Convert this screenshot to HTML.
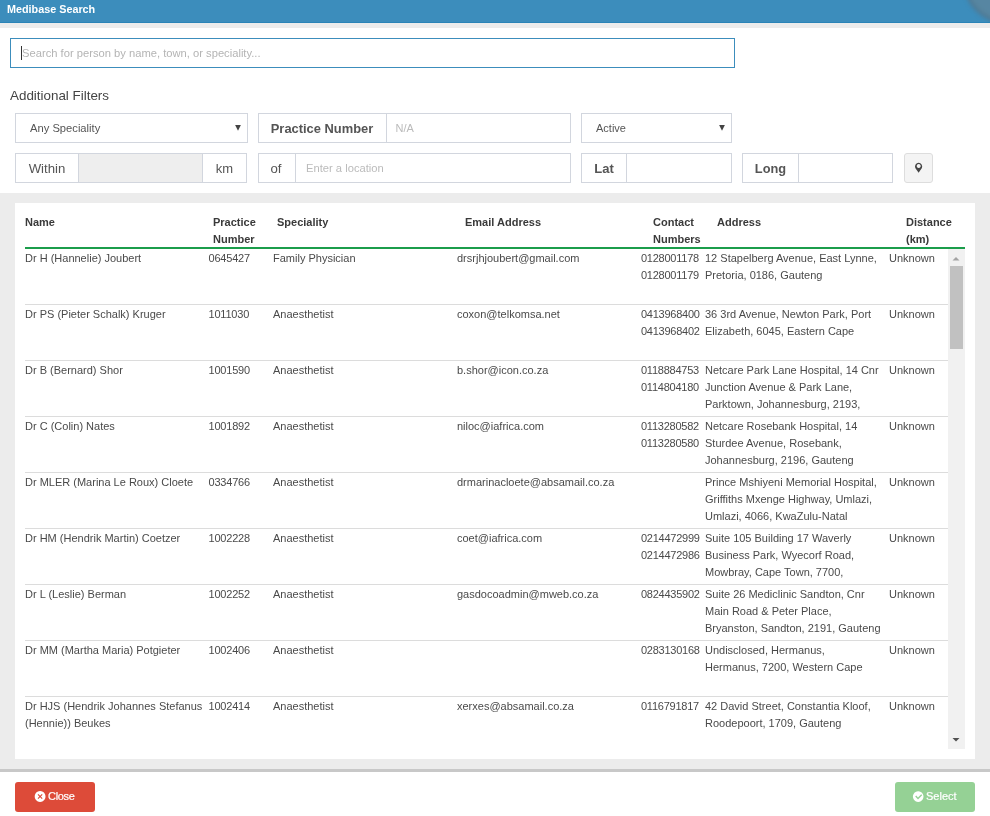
<!DOCTYPE html>
<html><head><meta charset="utf-8">
<style>
*{box-sizing:border-box;margin:0;padding:0}
body{will-change:transform}
html,body{width:990px;height:816px;overflow:hidden;background:#fff;font-family:"Liberation Sans",sans-serif;color:#444}
.a{position:absolute}
#hdr{left:0;top:0;width:990px;height:23px;background:#3c8dbc;border-bottom:1px solid #2b84b7}
#hdr .t{left:7px;top:1px;font-size:10.8px;font-weight:bold;color:#fff;line-height:16px}
#blob{left:964px;top:-59px;width:82px;height:82px;border-radius:50%;background:rgba(110,130,140,0.55);border:3px solid rgba(70,90,110,0.35);filter:blur(2px)}
#strip{left:0;top:23px;width:990px;height:5px;background:#ececec}
#search{left:10px;top:38px;width:725px;height:30px;border:1px solid #3c8dbc}
#search .ph{left:11px;top:7px;font-size:11.2px;line-height:14px;color:#b4b4b4}
#search .cur{left:10px;top:7px;width:1px;height:14px;background:#333}
#af{left:10px;top:88px;font-size:13.4px;line-height:16px;color:#444}
.box{border:1px solid #d2d6de;background:#fff}
.lbl{font-size:12.5px;color:#555;line-height:28px;text-align:center}
.sel{font-size:11px;color:#555;line-height:28px}
.arr{font-size:10px;color:#444;line-height:28px}
#gray{left:0;top:193px;width:990px;height:576px;background:#ececec}
#gline{left:0;top:769px;width:990px;height:3px;background:#c8c8c8}
#panel{left:15px;top:203px;width:960px;height:556px;background:#fff}
.th{font-size:11px;font-weight:bold;color:#3a3a3a;line-height:17px}
#green{left:25px;top:247px;width:940px;height:2px;background:#1b9d4b}
.row{left:25px;width:923px;height:56px;border-bottom:1px solid #dcdcdc}
.td{font-size:11px;line-height:17px;color:#4a4a4a;white-space:nowrap}
#track{left:948px;top:249px;width:17px;height:500px;background:#f1f1f1}
#thumb{left:950px;top:266px;width:13px;height:83px;background:#c1c1c1}
.btn{border-radius:3px}
.btxt{color:#fff;font-size:11px;line-height:29px;letter-spacing:-0.3px;-webkit-text-stroke:0.2px #fff}
</style></head><body>
<div id="hdr" class="a" style="overflow:hidden"><div class="t a">Medibase Search</div><div id="blob" class="a"></div></div>
<div id="strip" class="a"></div>

<div id="search" class="a"><div class="cur a"></div><div class="ph a">Search for person by name, town, or speciality...</div></div>
<div id="af" class="a">Additional Filters</div>

<!-- row 1 -->
<div class="a box" style="left:15px;top:113px;width:233px;height:30px"></div>
<div class="a sel" style="left:30px;top:114px;font-size:11.2px">Any Speciality</div>
<svg class="a" style="left:233px;top:122px" width="10" height="12"><path fill="#444" d="M2.1 3.1h5.8l-2.9 5.6z"/></svg>

<div class="a box" style="left:258px;top:113px;width:313px;height:30px"></div>
<div class="a" style="left:386px;top:114px;width:1px;height:28px;background:#d2d6de"></div>
<div class="a lbl" style="left:259px;top:115px;width:127px;font-weight:bold;font-size:12.9px;padding-right:1px">Practice Number</div>
<div class="a sel" style="left:395.5px;top:114px;color:#bbb">N/A</div>

<div class="a box" style="left:581px;top:113px;width:151px;height:30px"></div>
<div class="a sel" style="left:596px;top:114px">Active</div>
<svg class="a" style="left:717px;top:122px" width="10" height="12"><path fill="#444" d="M2.1 3.1h5.8l-2.9 5.6z"/></svg>

<!-- row 2 -->
<div class="a box" style="left:15px;top:153px;width:232px;height:30px"></div>
<div class="a" style="left:78px;top:154px;width:125px;height:28px;background:#eee;border-left:1px solid #d2d6de;border-right:1px solid #d2d6de"></div>
<div class="a lbl" style="left:16px;top:155px;width:62px;font-size:13.2px">Within</div>
<div class="a lbl" style="left:203px;top:155px;width:43px;font-size:13px">km</div>

<div class="a box" style="left:258px;top:153px;width:313px;height:30px"></div>
<div class="a" style="left:295px;top:154px;width:1px;height:28px;background:#d2d6de"></div>
<div class="a lbl" style="left:258px;top:155px;width:36px;font-size:13.2px">of</div>
<div class="a sel" style="left:306px;top:154px;color:#bbb;font-size:11.2px">Enter a location</div>

<div class="a box" style="left:581px;top:153px;width:151px;height:30px"></div>
<div class="a" style="left:626px;top:154px;width:1px;height:28px;background:#d2d6de"></div>
<div class="a lbl" style="left:582px;top:155px;width:44px;font-weight:bold;font-size:13px">Lat</div>

<div class="a box" style="left:742px;top:153px;width:151px;height:30px"></div>
<div class="a" style="left:798px;top:154px;width:1px;height:28px;background:#d2d6de"></div>
<div class="a lbl" style="left:743px;top:155px;width:55px;font-weight:bold;font-size:12.8px">Long</div>

<div class="a" style="left:904px;top:153px;width:29px;height:30px;background:#f4f4f4;border:1px solid #ddd;border-radius:3px"></div>

<div id="gray" class="a"></div>
<div id="gline" class="a"></div>
<div id="panel" class="a"></div>

<!-- table header -->
<div class="a th" style="left:25px;top:214px">Name</div>
<div class="a th" style="left:213px;top:214px">Practice<br>Number</div>
<div class="a th" style="left:277px;top:214px">Speciality</div>
<div class="a th" style="left:465px;top:214px">Email Address</div>
<div class="a th" style="left:653px;top:214px">Contact<br>Numbers</div>
<div class="a th" style="left:717px;top:214px">Address</div>
<div class="a th" style="left:906px;top:214px">Distance<br>(km)</div>
<div id="green" class="a"></div>

<div id="rows" class="a" style="left:0;top:249px;width:948px;height:500px;overflow:hidden">
<div class="a row" style="top:0px"></div>
<div class="a td" style="left:25px;top:1px">Dr H (Hannelie) Joubert</div>
<div class="a td" style="left:208.5px;top:1px;letter-spacing:-0.2px">0645427</div>
<div class="a td" style="left:273px;top:1px">Family Physician</div>
<div class="a td" style="left:457px;top:1px">drsrjhjoubert@gmail.com</div>
<div class="a td" style="left:641px;top:1px;letter-spacing:-0.25px">0128001178<br>0128001179</div>
<div class="a td" style="left:705px;top:1px">12 Stapelberg Avenue, East Lynne,<br>Pretoria, 0186, Gauteng</div>
<div class="a td" style="left:889px;top:1px">Unknown</div>
<div class="a row" style="top:56px"></div>
<div class="a td" style="left:25px;top:57px">Dr PS (Pieter Schalk) Kruger</div>
<div class="a td" style="left:208.5px;top:57px;letter-spacing:-0.2px">1011030</div>
<div class="a td" style="left:273px;top:57px">Anaesthetist</div>
<div class="a td" style="left:457px;top:57px">coxon@telkomsa.net</div>
<div class="a td" style="left:641px;top:57px;letter-spacing:-0.25px">0413968400<br>0413968402</div>
<div class="a td" style="left:705px;top:57px">36 3rd Avenue, Newton Park, Port<br>Elizabeth, 6045, Eastern Cape</div>
<div class="a td" style="left:889px;top:57px">Unknown</div>
<div class="a row" style="top:112px"></div>
<div class="a td" style="left:25px;top:113px">Dr B (Bernard) Shor</div>
<div class="a td" style="left:208.5px;top:113px;letter-spacing:-0.2px">1001590</div>
<div class="a td" style="left:273px;top:113px">Anaesthetist</div>
<div class="a td" style="left:457px;top:113px">b.shor@icon.co.za</div>
<div class="a td" style="left:641px;top:113px;letter-spacing:-0.25px">0118884753<br>0114804180</div>
<div class="a td" style="left:705px;top:113px">Netcare Park Lane Hospital, 14 Cnr<br>Junction Avenue &amp; Park Lane,<br>Parktown, Johannesburg, 2193,</div>
<div class="a td" style="left:889px;top:113px">Unknown</div>
<div class="a row" style="top:168px"></div>
<div class="a td" style="left:25px;top:169px">Dr C (Colin) Nates</div>
<div class="a td" style="left:208.5px;top:169px;letter-spacing:-0.2px">1001892</div>
<div class="a td" style="left:273px;top:169px">Anaesthetist</div>
<div class="a td" style="left:457px;top:169px">niloc@iafrica.com</div>
<div class="a td" style="left:641px;top:169px;letter-spacing:-0.25px">0113280582<br>0113280580</div>
<div class="a td" style="left:705px;top:169px">Netcare Rosebank Hospital, 14<br>Sturdee Avenue, Rosebank,<br>Johannesburg, 2196, Gauteng</div>
<div class="a td" style="left:889px;top:169px">Unknown</div>
<div class="a row" style="top:224px"></div>
<div class="a td" style="left:25px;top:225px">Dr MLER (Marina Le Roux) Cloete</div>
<div class="a td" style="left:208.5px;top:225px;letter-spacing:-0.2px">0334766</div>
<div class="a td" style="left:273px;top:225px">Anaesthetist</div>
<div class="a td" style="left:457px;top:225px">drmarinacloete@absamail.co.za</div>
<div class="a td" style="left:705px;top:225px">Prince Mshiyeni Memorial Hospital,<br>Griffiths Mxenge Highway, Umlazi,<br>Umlazi, 4066, KwaZulu-Natal</div>
<div class="a td" style="left:889px;top:225px">Unknown</div>
<div class="a row" style="top:280px"></div>
<div class="a td" style="left:25px;top:281px">Dr HM (Hendrik Martin) Coetzer</div>
<div class="a td" style="left:208.5px;top:281px;letter-spacing:-0.2px">1002228</div>
<div class="a td" style="left:273px;top:281px">Anaesthetist</div>
<div class="a td" style="left:457px;top:281px">coet@iafrica.com</div>
<div class="a td" style="left:641px;top:281px;letter-spacing:-0.25px">0214472999<br>0214472986</div>
<div class="a td" style="left:705px;top:281px">Suite 105 Building 17 Waverly<br>Business Park, Wyecorf Road,<br>Mowbray, Cape Town, 7700,</div>
<div class="a td" style="left:889px;top:281px">Unknown</div>
<div class="a row" style="top:336px"></div>
<div class="a td" style="left:25px;top:337px">Dr L (Leslie) Berman</div>
<div class="a td" style="left:208.5px;top:337px;letter-spacing:-0.2px">1002252</div>
<div class="a td" style="left:273px;top:337px">Anaesthetist</div>
<div class="a td" style="left:457px;top:337px">gasdocoadmin@mweb.co.za</div>
<div class="a td" style="left:641px;top:337px;letter-spacing:-0.25px">0824435902</div>
<div class="a td" style="left:705px;top:337px">Suite 26 Mediclinic Sandton, Cnr<br>Main Road &amp; Peter Place,<br>Bryanston, Sandton, 2191, Gauteng</div>
<div class="a td" style="left:889px;top:337px">Unknown</div>
<div class="a row" style="top:392px"></div>
<div class="a td" style="left:25px;top:393px">Dr MM (Martha Maria) Potgieter</div>
<div class="a td" style="left:208.5px;top:393px;letter-spacing:-0.2px">1002406</div>
<div class="a td" style="left:273px;top:393px">Anaesthetist</div>
<div class="a td" style="left:641px;top:393px;letter-spacing:-0.25px">0283130168</div>
<div class="a td" style="left:705px;top:393px">Undisclosed, Hermanus,<br>Hermanus, 7200, Western Cape</div>
<div class="a td" style="left:889px;top:393px">Unknown</div>
<div class="a row" style="top:448px"></div>
<div class="a td" style="left:25px;top:449px">Dr HJS (Hendrik Johannes Stefanus<br>(Hennie)) Beukes</div>
<div class="a td" style="left:208.5px;top:449px;letter-spacing:-0.2px">1002414</div>
<div class="a td" style="left:273px;top:449px">Anaesthetist</div>
<div class="a td" style="left:457px;top:449px">xerxes@absamail.co.za</div>
<div class="a td" style="left:641px;top:449px;letter-spacing:-0.25px">0116791817</div>
<div class="a td" style="left:705px;top:449px">42 David Street, Constantia Kloof,<br>Roodepoort, 1709, Gauteng</div>
<div class="a td" style="left:889px;top:449px">Unknown</div>
</div><!--/rows-->

<div id="track" class="a"></div>
<div id="thumb" class="a"></div>

<div class="a btn" style="left:15px;top:782px;width:80px;height:30px;background:#dd4b39"></div>
<div class="a btn" style="left:895px;top:782px;width:80px;height:30px;background:#95d195"></div>
<svg class="a" style="left:0;top:0" width="990" height="816" viewBox="0 0 990 816">
<path fill="#fff" fill-rule="evenodd" d="M40.1 791.1a5.4 5.4 0 1 0 0.001 0z M37.6 794.8l1.7 1.7-1.7 1.7 0.8 0.8 1.7-1.7 1.7 1.7 0.8-0.8-1.7-1.7 1.7-1.7-0.8-0.8-1.7 1.7-1.7-1.7z"/>
<path fill="#fff" fill-rule="evenodd" d="M918.2 791.3a5.3 5.3 0 1 0 0.001 0z M915.2 796.6l1-1 1.8 1.8 3.2-3.2 1 1-4.2 4.2z"/>
<path fill="#444" fill-rule="evenodd" d="M918.6 172.8L915.3 167.9A3.6 3.6 0 1 1 921.9 167.9Z M918.7 163.9a2 2 0 1 0 0.001 0z"/>
<path fill="#a3a3a3" d="M952.5 260.5h7l-3.5-3.5z"/>
<path fill="#505050" d="M952.5 738h7l-3.5 3.5z"/>
</svg>
<div class="a btxt" style="left:48px;top:782px">Close</div>
<div class="a btxt" style="left:926px;top:782px;letter-spacing:0">Select</div>
</body></html>
